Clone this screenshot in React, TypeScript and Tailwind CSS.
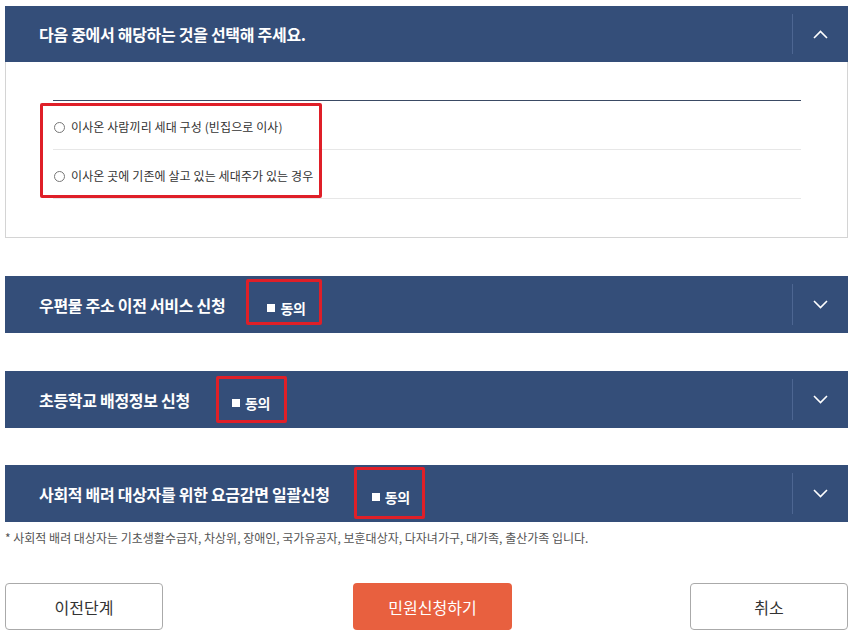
import React from "react";

const FONT = "font-['Noto_Sans_CJK_KR','Noto_Sans',sans-serif]";

function Chevron({ up }: { up?: boolean }) {
  return (
    <svg width="15" height="9" viewBox="0 0 15 9" fill="none">
      <polyline
        points={up ? "1,8 7.5,1.5 14,8" : "1,1 7.5,7.5 14,1"}
        stroke="#ffffff"
        strokeWidth="1.6"
      />
    </svg>
  );
}

function Toggle({ up }: { up?: boolean }) {
  return (
    <div className="ml-auto flex h-full w-[56px] items-center py-[8px]">
      <div className="h-full w-px bg-[#4d6692]" />
      <div className="flex flex-1 items-center justify-center">
        <Chevron up={up} />
      </div>
    </div>
  );
}

/* 빨간 박스는 스크린샷 위에 그려진 표시라 absolute 로 얹음 */
function AgreeLabel({ box }: { box: { left: number; top: number; w: number; h: number } }) {
  return (
    <div className="relative ml-[42px] flex h-full items-center pt-[6px]">
      <span className="mr-[5px] h-[8px] w-[8px] bg-white" />
      <span className="text-[14px] font-bold leading-[16px] tracking-[-0.3px] text-white">동의</span>
      <div
        className="pointer-events-none absolute rounded-[2px] border-[3px] border-[#df1f28]"
        style={{ left: box.left, top: box.top, width: box.w, height: box.h }}
      />
    </div>
  );
}

function Section({
  title,
  box,
  className = "",
}: {
  title: string;
  box: { left: number; top: number; w: number; h: number };
  className?: string;
}) {
  return (
    <div className={"flex h-[57px] items-center bg-[#344e79] pl-[34px] " + className}>
      <h3 className="text-[16px] font-bold leading-[20px] tracking-[-0.3px] text-white">{title}</h3>
      <AgreeLabel box={box} />
      <Toggle />
    </div>
  );
}

const options = ["이사온 사람끼리 세대 구성 (빈집으로 이사)", "이사온 곳에 기존에 살고 있는 세대주가 있는 경우"];

export default function App() {
  return (
    <div className={"h-[636px] w-[854px] overflow-hidden bg-white pl-[5px] pr-[6px] pt-[6px] " + FONT}>
      {/* 세대 구성 선택 */}
      <div>
        <div className="flex h-[56px] items-center bg-[#344e79] pl-[34px]">
          <h2 className="text-[16px] font-bold leading-[20px] tracking-[-0.3px] text-white">
            다음 중에서 해당하는 것을 선택해 주세요.
          </h2>
          <Toggle up />
        </div>
        <div className="h-[176px] border-x border-b border-[#d4d4d4] pl-[47px] pr-[46px] pt-[38px]">
          <div className="relative border-t border-[#3a4a64]">
            {options.map((o) => (
              <label
                key={o}
                className="flex h-[49px] items-center gap-[6px] border-b border-[#e7e7e7] pl-[1px] pt-[4px]"
              >
                <span className="h-[11px] w-[11px] rounded-full border border-[#777] bg-white" />
                <span className="text-[12px] leading-[16px] tracking-[0.1px] text-[#333]">{o}</span>
              </label>
            ))}
            <div className="pointer-events-none absolute left-[-13px] top-[2px] h-[95px] w-[282px] rounded-[2px] border-[3px] border-[#df1f28]" />
          </div>
        </div>
      </div>

      <Section
        className="mt-[38px]"
        title="우편물 주소 이전 서비스 신청"
        box={{ left: -21, top: 3, w: 76, h: 46 }}
      />
      <Section
        className="mt-[38px]"
        title="초등학교 배정정보 신청"
        box={{ left: -16, top: 5, w: 71, h: 47 }}
      />
      <Section
        className="mt-[37px]"
        title="사회적 배려 대상자를 위한 요금감면 일괄신청"
        box={{ left: -18, top: 2, w: 71, h: 52 }}
      />

      <p className="mt-[8px] text-[12px] leading-[16px] text-[#555]">
        * 사회적 배려 대상자는 기초생활수급자, 차상위, 장애인, 국가유공자, 보훈대상자, 다자녀가구, 대가족, 출산가족 입니다.
      </p>

      <div className="mt-[37px] flex">
        <button className="h-[47px] w-[158px] rounded-[4px] border border-[#aaa] bg-white text-[16px] text-[#333]">
          이전단계
        </button>
        <button className="ml-[190px] h-[47px] w-[159px] rounded-[4px] bg-[#e8603f] text-[16px] text-white">
          민원신청하기
        </button>
        <button className="ml-auto h-[47px] w-[158px] rounded-[4px] border border-[#aaa] bg-white text-[16px] text-[#333]">
          취소
        </button>
      </div>
    </div>
  );
}
